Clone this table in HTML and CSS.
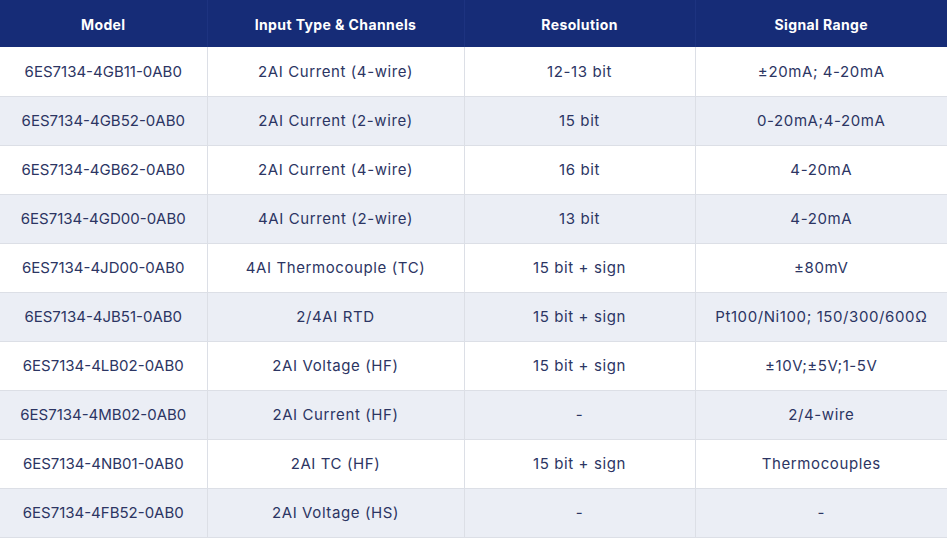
FILE: index.html
```html
<!DOCTYPE html>
<html lang="en">
<head>
<meta charset="utf-8">
<title>Analog Input Modules</title>
<link rel="stylesheet" href="styles.css">
</head>
<body>
<table class="spec">
  <colgroup>
    <col class="c1"><col class="c2"><col class="c3"><col class="c4">
  </colgroup>
  <thead>
    <tr><th>Model</th><th>Input Type &amp; Channels</th><th>Resolution</th><th>Signal Range</th></tr>
  </thead>
  <tbody>
    <tr><td>6ES7134-4GB11-0AB0</td><td>2AI Current (4-wire)</td><td>12-13 bit</td><td>±20mA; 4-20mA</td></tr>
    <tr><td>6ES7134-4GB52-0AB0</td><td>2AI Current (2-wire)</td><td>15 bit</td><td>0-20mA;4-20mA</td></tr>
    <tr><td>6ES7134-4GB62-0AB0</td><td>2AI Current (4-wire)</td><td>16 bit</td><td>4-20mA</td></tr>
    <tr><td>6ES7134-4GD00-0AB0</td><td>4AI Current (2-wire)</td><td>13 bit</td><td>4-20mA</td></tr>
    <tr><td>6ES7134-4JD00-0AB0</td><td>4AI Thermocouple (TC)</td><td>15 bit + sign</td><td>±80mV</td></tr>
    <tr><td>6ES7134-4JB51-0AB0</td><td>2/4AI RTD</td><td>15 bit + sign</td><td>Pt100/Ni100; 150/300/600Ω</td></tr>
    <tr><td>6ES7134-4LB02-0AB0</td><td>2AI Voltage (HF)</td><td>15 bit + sign</td><td>±10V;±5V;1-5V</td></tr>
    <tr><td>6ES7134-4MB02-0AB0</td><td>2AI Current (HF)</td><td>-</td><td>2/4-wire</td></tr>
    <tr><td>6ES7134-4NB01-0AB0</td><td>2AI TC (HF)</td><td>15 bit + sign</td><td>Thermocouples</td></tr>
    <tr><td>6ES7134-4FB52-0AB0</td><td>2AI Voltage (HS)</td><td>-</td><td>-</td></tr>
  </tbody>
</table>
</body>
</html>
```
FILE: styles.css
```css
html, body {
  margin: 0;
  padding: 0;
  background: #ffffff;
}
.spec {
  width: 947px;
  border-collapse: collapse;
  table-layout: fixed;
  font-family: Inter, "Noto Sans", sans-serif;
}
.c1 { width: 207px; }
.c2 { width: 257px; }
.c3 { width: 231px; }
.c4 { width: 252px; }
.spec thead tr { height: 47px; }
.spec tbody tr { height: 49px; }
.spec th {
  padding: 1px 0 0;
  background: #162c77;
  color: #ffffff;
  font-size: 14px;
  font-weight: 700;
  letter-spacing: 0.4px;
  text-align: center;
  vertical-align: middle;
  border-right: 1px solid #1d3380;
}
.spec th:last-child, .spec td:last-child { border-right: none; }
.spec td {
  padding: 0;
  text-align: center;
  vertical-align: middle;
  font-size: 15px;
  font-weight: 400;
  color: #2c3563;
  letter-spacing: 0.6px;
  border-right: 1px solid #dcdfe6;
  border-bottom: 1px solid #dcdfe6;
}
.spec td:first-child { letter-spacing: 0; }
.spec tbody tr:nth-child(even) td { background: #ebeef5; }
```
